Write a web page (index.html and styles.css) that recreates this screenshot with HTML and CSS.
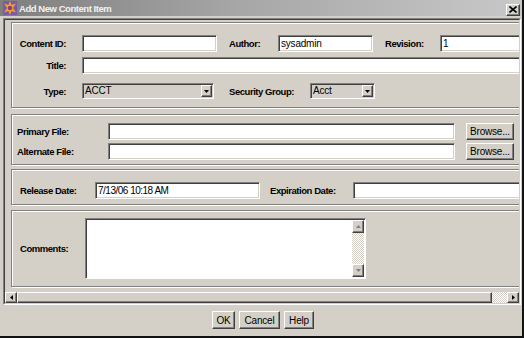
FILE: index.html
```html
<!DOCTYPE html>
<html>
<head>
<meta charset="utf-8">
<title>Add New Content Item</title>
<link rel="stylesheet" href="styles.css">
</head>
<body>
<div class="window">
  <div class="titlebar">
    <svg class="app-icon" width="14" height="14" viewBox="0 0 14 14">
      <rect x="0" y="0" width="14" height="14" fill="#7a5aa8"/>
      <polygon points="7,0 8.6,4 13,2.6 10,7 13,11.4 8.6,10 7,14 5.4,10 1,11.4 4,7 1,2.6 5.4,4" fill="#f2a41e"/>
      <circle cx="7" cy="7" r="2.3" fill="#8a3c8c"/>
    </svg>
    <span class="title-text">Add New Content Item</span>
    <span class="close-btn"><svg width="8" height="7" viewBox="0 0 8 7"><path d="M0.5 0.5 L7.5 6.5 M7.5 0.5 L0.5 6.5" stroke="#000" stroke-width="1.6"/></svg></span>
  </div>

  <div class="scrollpane">
    <div class="scroll-inner">
      <div class="viewport">
        <div class="canvas">
          <div class="group g-meta">
            <div class="row">
              <span class="lbl lbl-meta">Content ID:</span>
              <span class="field w-id"></span>
              <span class="lbl lbl-author">Author:</span>
              <span class="field w-author">sysadmin</span>
              <span class="lbl lbl-rev">Revision:</span>
              <span class="field w-rev">1</span>
            </div>
            <div class="row row-title">
              <span class="lbl lbl-meta">Title:</span>
              <span class="field w-title"></span>
            </div>
            <div class="row row-type">
              <span class="lbl lbl-meta">Type:</span>
              <span class="combo w-type"><span class="combo-text">ACCT</span><span class="combo-arrow"><svg width="5" height="3" viewBox="0 0 5 3"><path d="M0 0H5L2.5 3Z" fill="#000"/></svg></span></span>
              <span class="lbl lbl-group">Security Group:</span>
              <span class="combo w-group"><span class="combo-text">Acct</span><span class="combo-arrow"><svg width="5" height="3" viewBox="0 0 5 3"><path d="M0 0H5L2.5 3Z" fill="#000"/></svg></span></span>
            </div>
          </div>

          <div class="group g-files">
            <div class="row">
              <span class="lbl lbl-file">Primary File:</span>
              <span class="field w-file"></span>
              <span class="btn browse">Browse...</span>
            </div>
            <div class="row row-next">
              <span class="lbl lbl-file">Alternate File:</span>
              <span class="field w-file"></span>
              <span class="btn browse">Browse...</span>
            </div>
          </div>

          <div class="group g-dates">
            <div class="row">
              <span class="lbl lbl-date">Release Date:</span>
              <span class="field w-release date-text">7/13/06 10:18 AM</span>
              <span class="lbl lbl-exp">Expiration Date:</span>
              <span class="field w-exp"></span>
            </div>
          </div>

          <div class="group g-notes">
            <div class="row row-memo">
              <span class="lbl lbl-notes">Comments:</span>
              <span class="memo">
                <span class="memo-text"></span>
                <span class="vscroll">
                  <span class="vbtn"><svg width="5" height="3" viewBox="0 0 5 3"><path d="M0 3H5L2.5 0Z" fill="#808080"/></svg></span>
                  <span class="vtrack"></span>
                  <span class="vbtn"><svg width="5" height="3" viewBox="0 0 5 3"><path d="M0 0H5L2.5 3Z" fill="#808080"/></svg></span>
                </span>
              </span>
            </div>
          </div>
        </div>
      </div>
      <div class="hscroll">
        <span class="hbtn"><svg width="3" height="5" viewBox="0 0 3 5"><path d="M3 0V5L0 2.5Z" fill="#000"/></svg></span>
        <span class="hthumb"></span>
        <span class="htrack"></span>
        <span class="hbtn"><svg width="3" height="5" viewBox="0 0 3 5"><path d="M0 0V5L3 2.5Z" fill="#000"/></svg></span>
      </div>
    </div>
  </div>

  <div class="actions">
    <span class="btn b-ok">OK</span>
    <span class="btn b-cancel">Cancel</span>
    <span class="btn b-help">Help</span>
  </div>
</div>
</body>
</html>
```

FILE: styles.css
```css
body {
  margin: 0;
  background: #d4d0c8;
  font-family: "Liberation Sans", Arial, sans-serif;
  font-size: 10px;
  letter-spacing: -0.2px;
  color: #000;
}

.window {
  width: 524px;
  height: 338px;
  box-sizing: border-box;
  border-right: 2px solid #111;
  border-bottom: 2px solid #111;
  background: #d4d0c8;
  display: flex;
  flex-direction: column;
  overflow: hidden;
}

/* title bar */
.titlebar {
  height: 16px;
  flex: none;
  display: flex;
  align-items: center;
  padding: 0 2px 0 3px;
  background: linear-gradient(90deg, #7e7e7e 0%, #a6a6a6 45%, #c8c8c8 100%);
}
.app-icon { flex: none; margin-right: 2px; }
.title-text {
  flex: 1;
  color: #f2f2f2;
  font-weight: bold;
  font-size: 9.5px;
  letter-spacing: -0.45px;
  white-space: nowrap;
}
.close-btn {
  width: 14px;
  height: 12px;
  box-sizing: border-box;
  background: #d4d0c8;
  border: 1px solid;
  border-color: #fff #404040 #404040 #fff;
  box-shadow: inset -1px -1px #808080;
  display: flex;
  align-items: center;
  justify-content: center;
  margin-top: 3px;
}

/* scroll pane */
.scrollpane {
  margin: 2px 0 0 3px;
  width: 518px;
  height: 287px;
  box-sizing: border-box;
  border: 1px solid;
  border-color: #808080 #fff #fff #808080;
  flex: none;
}
.scroll-inner {
  height: 100%;
  box-sizing: border-box;
  border: 1px solid;
  border-color: #404040 #d4d0c8 #d4d0c8 #404040;
  display: flex;
  flex-direction: column;
}
.viewport {
  height: 272px;
  overflow: hidden;
  flex: none;
}
.canvas {
  width: 560px;
  padding: 2px 0 0 6px;
}

/* groups */
.group {
  width: 540px;
  box-sizing: border-box;
  border: 1px solid #808080;
  box-shadow: inset 1px 1px #fff, 1px 1px #fff;
}
.g-meta { height: 86px; padding-top: 12px; }
.g-files { height: 51px; margin-top: 6px; padding-top: 8px; }
.g-dates { height: 36px; margin-top: 4px; padding-top: 12px; }
.g-notes { height: 77px; margin-top: 5px; padding-top: 7px; }

.row {
  display: flex;
  align-items: center;
  height: 17px;
}
.row-title { margin-top: 5px; }
.row-type { margin-top: 9px; height: 16px; }
.row-next { margin-top: 3px; }
.row-memo { height: 61px; }

.lbl {
  font-weight: bold;
  font-size: 9.5px;
  letter-spacing: -0.45px;
  white-space: nowrap;
  flex: none;
  box-sizing: border-box;
}
.lbl-meta { width: 70px; text-align: right; padding-right: 16px; }
.lbl-author { width: 49px; }
.lbl-rev { width: 55px; }
.lbl-group { width: 81px; }
.lbl-file { width: 96px; padding-left: 5px; }
.lbl-date { width: 83px; padding-left: 8px; }
.lbl-exp { width: 83px; }
.lbl-notes { width: 73px; padding-left: 8px; }

/* text fields */
.field {
  display: block;
  flex: none;
  box-sizing: border-box;
  height: 17px;
  background: #fff;
  border: 1px solid;
  border-color: #808080 #fff #fff #808080;
  box-shadow: inset 1px 1px #404040, inset -1px -1px #d4d0c8;
  padding: 0 2px;
  line-height: 15px;
  white-space: nowrap;
  overflow: hidden;
}
.date-text { letter-spacing: -0.5px; }
.w-id { width: 135px; margin-right: 12px; }
.w-author { width: 95px; margin-right: 12px; }
.w-rev { width: 120px; }
.w-title { width: 460px; }
.w-file { width: 347px; margin-right: 11px; }
.w-release { width: 165px; margin-right: 10px; }
.w-exp { width: 170px; }

/* combo boxes */
.combo {
  display: flex;
  align-items: center;
  flex: none;
  height: 16px;
  box-sizing: border-box;
  border: 1px solid;
  border-color: #808080 #fff #fff #808080;
  box-shadow: inset 1px 1px #404040;
  background: #d4d0c8;
  padding: 1px 1px 1px 2px;
}
.w-type { width: 132px; margin-right: 15px; }
.w-group { width: 65px; }
.combo-text { flex: 1; line-height: 12px; }
.combo-arrow {
  width: 11px;
  height: 12px;
  box-sizing: border-box;
  border: 1px solid;
  border-color: #fff #404040 #404040 #fff;
  box-shadow: inset -1px -1px #808080;
  display: flex;
  align-items: center;
  justify-content: center;
}

/* buttons */
.btn {
  box-sizing: border-box;
  flex: none;
  border: 1px solid;
  border-color: #fff #404040 #404040 #fff;
  box-shadow: inset -1px -1px #808080;
  background: #d4d0c8;
  display: flex;
  align-items: center;
  justify-content: center;
  white-space: nowrap;
}
.browse { width: 48px; height: 17px; }

/* memo */
.memo {
  display: flex;
  flex: none;
  width: 281px;
  height: 61px;
  box-sizing: border-box;
  background: #fff;
  border: 1px solid;
  border-color: #808080 #fff #fff #808080;
  box-shadow: inset 1px 1px #404040;
  padding: 1px;
}
.memo-text { flex: 1; }
.vscroll {
  width: 12px;
  display: flex;
  flex-direction: column;
  background: repeating-conic-gradient(#fff 0 25%, #d4d0c8 0 50%) 0 0 / 2px 2px;
}
.vbtn {
  height: 13px;
  box-sizing: border-box;
  border: 1px solid;
  border-color: #fff #404040 #404040 #fff;
  box-shadow: inset -1px -1px #808080;
  background: #d4d0c8;
  display: flex;
  align-items: center;
  justify-content: center;
}
.vtrack { flex: 1; }

/* horizontal scrollbar */
.hscroll {
  height: 11px;
  display: flex;
  flex: none;
}
.hbtn, .hthumb {
  box-sizing: border-box;
  border: 1px solid;
  border-color: #fff #404040 #404040 #fff;
  box-shadow: inset -1px -1px #808080;
  background: #d4d0c8;
}
.hbtn {
  width: 12px;
  display: flex;
  align-items: center;
  justify-content: center;
}
.hthumb { width: 475px; }
.htrack {
  flex: 1;
  background: repeating-conic-gradient(#fff 0 25%, #d4d0c8 0 50%) 0 0 / 2px 2px;
}

/* dialog buttons */
.actions {
  display: flex;
  justify-content: center;
  gap: 4px;
  padding: 6px 0 0 4px;
}
.actions .btn { height: 18px; }
.b-ok { width: 23px; }
.b-cancel { width: 41px; }
.b-help { width: 30px; }
```
